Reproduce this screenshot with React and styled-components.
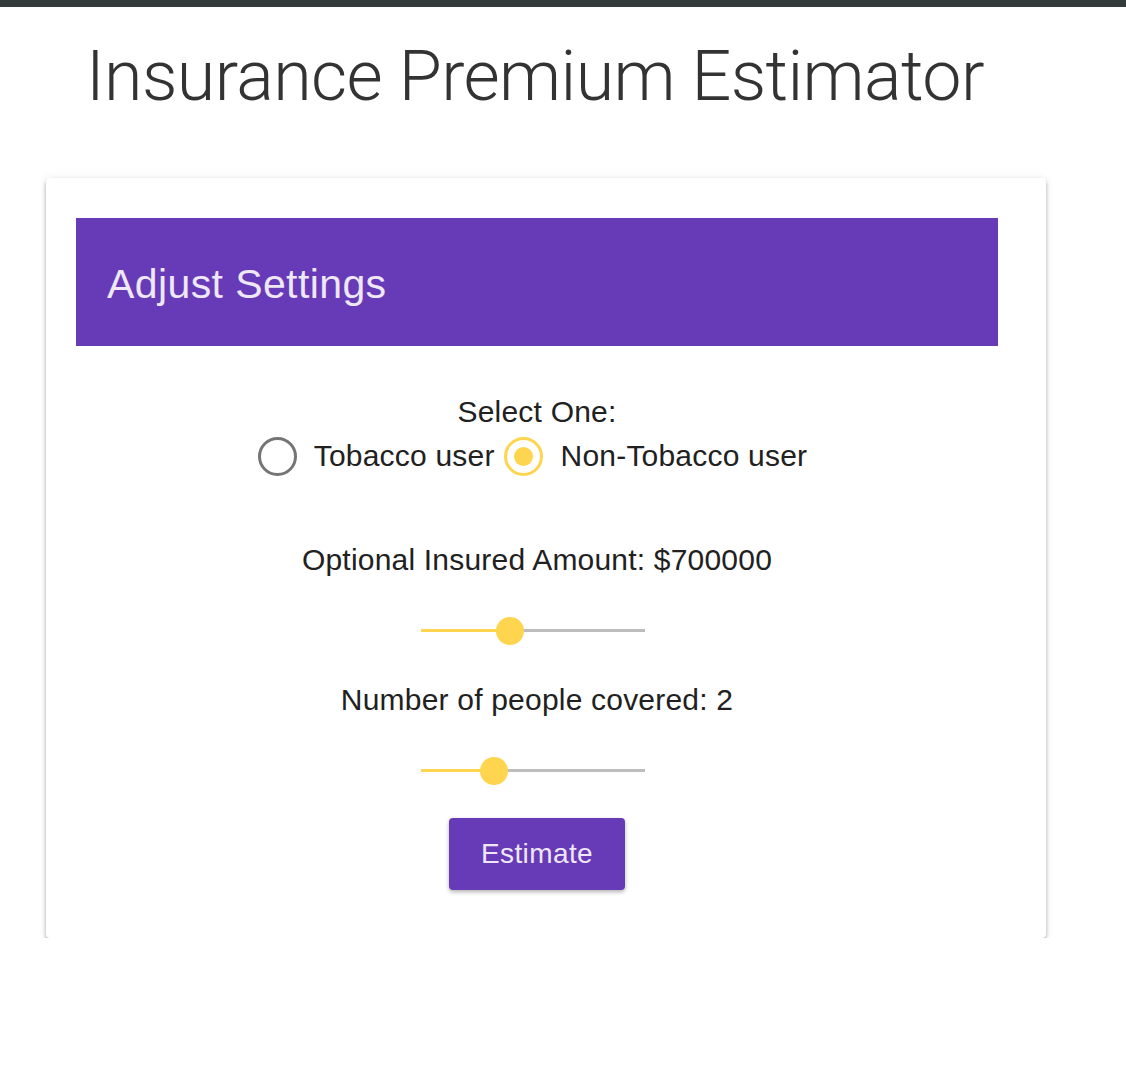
import React from "react";
import styled, { createGlobalStyle } from "styled-components";

const Global = createGlobalStyle`
  html, body { margin: 0; padding: 0; background: #ffffff; }
  body { font-family: "Liberation Sans", Arial, sans-serif; color: #212121; }
`;

const TopBar = styled.div`
  height: 7px;
  background: #353a3a;
`;

const Title = styled.h1`
  margin: 0;
  padding: 24px 0 0 86px;
  height: 145px;
  box-sizing: border-box;
  font-family: Roboto, "Open Sans", sans-serif;
  font-weight: 300;
  font-size: 70px;
  line-height: 90px;
  color: #333333;
  letter-spacing: -0.6px;
`;

const Card = styled.section`
  margin: 26px 0 0 46px;
  width: 1000px;
  box-sizing: border-box;
  padding: 40px 48px 48px 30px;
  background: #fff;
  border-radius: 4px;
  box-shadow: 0 3px 4px rgba(0,0,0,0.3), 0 0 8px rgba(0,0,0,0.07);
`;

const Header = styled.div`
  height: 128px;
  background: #673ab7;
  display: flex;
  align-items: center;
  padding-left: 31px;
  padding-top: 4px;
  box-sizing: border-box;
  color: #ede7f6;
  font-size: 41px;
  letter-spacing: 0.4px;
  font-family: "Liberation Sans", Arial, sans-serif;
`;

const Body = styled.div`
  display: flex;
  flex-direction: column;
  align-items: center;
  padding-top: 50px;
`;

const Label = styled.div`
  font-size: 30px;
  line-height: 32px;
  letter-spacing: 0.2px;
  color: #212121;
  margin-top: ${p => p.$mt || 0}px;
`;

const RadioRow = styled.div`
  display: flex;
  align-items: center;
  margin-top: 8px;
  margin-right: 9px;
`;

const RadioItem = styled.label`
  display: flex;
  align-items: center;
  font-size: 30px;
  letter-spacing: 0.2px;
  line-height: 40px;
  color: #212121;
  margin-right: ${p => p.$mr || 0}px;
`;

const Circle = styled.span`
  width: 39px;
  height: 39px;
  box-sizing: border-box;
  border-radius: 50%;
  border: 3px solid ${p => (p.$on ? "#ffd54f" : "#757575")};
  display: inline-flex;
  align-items: center;
  justify-content: center;
  margin-right: ${p => p.$gap}px;
  &::after {
    content: "";
    width: 19px;
    height: 19px;
    border-radius: 50%;
    background: #ffd54f;
    display: ${p => (p.$on ? "block" : "none")};
  }
`;

const SliderWrap = styled.div`
  width: 224px;
  height: 28px;
  position: relative;
  margin-top: ${p => p.$mt}px;
  margin-right: 9px;
`;

const Track = styled.div`
  position: absolute;
  left: 0;
  right: 0;
  top: 13px;
  height: 3px;
  background: #bdbdbd;
`;

const Fill = styled.div`
  position: absolute;
  left: 0;
  top: 13px;
  height: 3px;
  background: #ffd54f;
`;

const Thumb = styled.div`
  position: absolute;
  top: 1px;
  width: 28px;
  height: 28px;
  margin-left: -14px;
  border-radius: 50%;
  background: #ffd54f;
`;

const Slider = ({ pct, mt }) => (
  <SliderWrap $mt={mt}>
    <Track />
    <Fill style={{ width: `${pct}%` }} />
    <Thumb style={{ left: `${pct}%` }} />
  </SliderWrap>
);

const Button = styled.button`
  margin-top: 34px;
  width: 176px;
  height: 72px;
  border: none;
  border-radius: 4px;
  background: #673ab7;
  color: #ede7f6;
  font-family: "Liberation Sans", Arial, sans-serif;
  font-size: 28px;
  letter-spacing: 0.4px;
  box-shadow: 0 2px 4px rgba(0,0,0,0.3);
  cursor: pointer;
`;

export default function App() {
  return (
    <>
      <Global />
      <TopBar />
      <Title>Insurance Premium Estimator</Title>
      <Card>
        <Header>Adjust Settings</Header>
        <Body>
          <Label>Select One:</Label>
          <RadioRow>
            <RadioItem $mr={9}>
              <Circle $gap={17} />
              Tobacco user
            </RadioItem>
            <RadioItem>
              <Circle $on $gap={18} />
              Non-Tobacco user
            </RadioItem>
          </RadioRow>
          <Label $mt={68}>Optional Insured Amount: $700000</Label>
          <Slider pct={40} mt={40} />
          <Label $mt={40}>Number of people covered: 2</Label>
          <Slider pct={33} mt={40} />
          <Button>Estimate</Button>
        </Body>
      </Card>
    </>
  );
}
